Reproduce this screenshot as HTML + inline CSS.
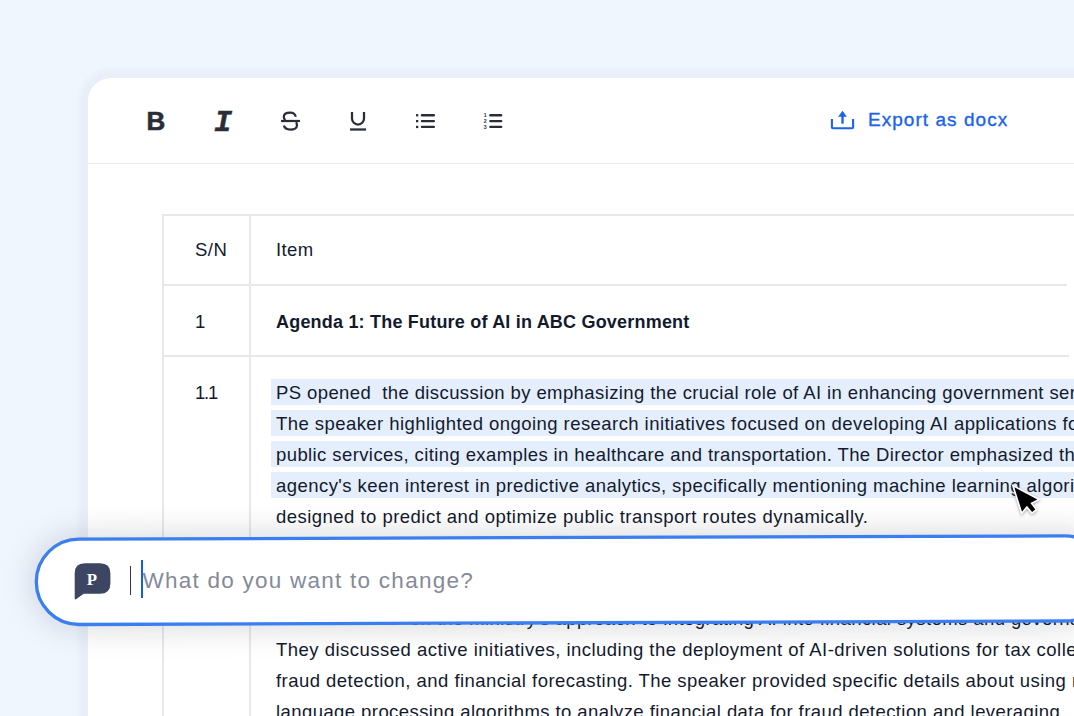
<!DOCTYPE html>
<html lang="en">
<head>
<meta charset="utf-8">
<title>Editor</title>
<style>
*{box-sizing:border-box;margin:0;padding:0}
html,body{width:1074px;height:716px;overflow:hidden;background:#f0f6fe}
body{position:relative;font-family:"Liberation Sans",Arial,sans-serif;color:#131a2e}
.card{position:absolute;left:88px;top:77.5px;width:1100px;height:760px;background:#fff;border-radius:23px 0 0 0;box-shadow:0 0 5px 9px #e9eff9}
.tb-line{position:absolute;left:88px;top:163px;width:1000px;height:1px;background:#e9ebf1}
.ico{position:absolute;overflow:visible}
.glyph{position:absolute;white-space:pre;color:#2a2d38;font-weight:700;transform-origin:0 0}
.export{position:absolute;left:868px;top:106px;font-size:19px;line-height:28px;color:#1d62ea;white-space:pre;letter-spacing:1.04px;-webkit-text-stroke:.35px #1d62ea}
.hl{position:absolute;left:271px;width:820px;height:26px;background:#e4eefc}
.ln{position:absolute;left:276px;font-size:18.5px;line-height:31px;white-space:pre;color:#131a2e}
.cell{position:absolute;font-size:18.5px;line-height:31px;white-space:pre;color:#131a2e}
.vline{position:absolute;width:2px;background:#e6e8ee}
.hline{position:absolute;height:2px;background:#e6e8ee}
.ph{position:absolute;left:142.5px;top:563px;font-size:22.5px;line-height:36px;color:#848a99;white-space:pre;letter-spacing:1.25px}
</style>
</head>
<body>
<div class="card"></div>
<div class="tb-line"></div>

<!-- toolbar icons -->
<div class="glyph" style="left:146.5px;top:105.5px;font-size:26px;line-height:31px;-webkit-text-stroke:.6px #2a2d38">B</div>
<div class="glyph" style="left:214px;top:108px;font-size:30px;line-height:31px;font-style:italic;font-family:'Liberation Mono',monospace;-webkit-text-stroke:.5px #2a2d38">I</div>
<svg class="ico" style="left:0;top:0" width="1074" height="160" viewBox="0 0 1074 160" fill="none" stroke="#2a2d38" stroke-width="2.25">
  <path d="M295.8 116.8C295 114 293.2 112.7 290.4 112.7C287 112.7 283.8 114 283.8 117C283.8 118.4 284.4 119.4 285.4 120.2"/>
  <path d="M283.9 125.6C284.5 128.2 287 129.6 290.5 129.6C294 129.6 297 128.1 297 125.3C297 124 296.6 123 296 122.2"/>
  <path d="M281 121H300"/>
  <path d="M352 112V118.5a6 6 0 0 0 12 0V112"/>
  <path d="M350 129.5H366"/>
  <g stroke="none" fill="#2a2d38">
    <rect x="416" y="114.1" width="2.3" height="2.3"/><rect x="416" y="120" width="2.3" height="2.3"/><rect x="416" y="125.8" width="2.3" height="2.3"/>
    <rect x="420.8" y="114.1" width="14.2" height="2.3" rx="1"/><rect x="420.8" y="120" width="14.2" height="2.3" rx="1"/><rect x="420.8" y="125.8" width="14.2" height="2.3" rx="1"/>
    <rect x="489.2" y="114.1" width="13.1" height="2.3" rx="1"/><rect x="489.2" y="120" width="13.1" height="2.3" rx="1"/><rect x="489.2" y="125.8" width="13.1" height="2.3" rx="1"/>
    <text x="483.7" y="117.1" font-family="Liberation Sans,sans-serif" font-size="5.2" font-weight="700">1</text>
    <text x="483.7" y="123" font-family="Liberation Sans,sans-serif" font-size="5.2" font-weight="700">2</text>
    <text x="483.7" y="128.8" font-family="Liberation Sans,sans-serif" font-size="5.2" font-weight="700">3</text>
  </g>
  <g stroke="#1d62ea" stroke-width="2.1">
    <path d="M831.9 119V127.3Q831.9 128.3 832.9 128.3H852.1Q853.1 128.3 853.1 127.3V119"/>
    <path d="M842.5 116V123.7" stroke-width="2.4"/>
    <path d="M842.5 110.8L846.9 116.8H838.1Z" fill="#1d62ea" stroke="none"/>
  </g>
</svg>
<div class="export">Export as docx</div>

<!-- table grid -->
<div class="hline" style="left:162px;top:214px;width:920px"></div>
<div class="hline" style="left:162px;top:284px;width:905px"></div>
<div class="hline" style="left:162px;top:355px;width:907px"></div>
<div class="vline" style="left:162px;top:214px;height:520px"></div>
<div class="vline" style="left:249px;top:214px;height:520px"></div>

<div class="cell" style="left:195px;top:234px;letter-spacing:.45px">S/N</div>
<div class="cell" style="left:276px;top:234px;letter-spacing:.4px">Item</div>
<div class="cell" style="left:195px;top:306px">1</div>
<div class="cell" style="left:276px;top:307px;font-weight:700;font-size:18px;letter-spacing:.2px">Agenda 1: The Future of AI in ABC Government</div>
<div class="cell" style="left:195px;top:377px;letter-spacing:-1.2px">1.1</div>

<div class="hl" style="top:379px"></div>
<div class="hl" style="top:410px"></div>
<div class="hl" style="top:441px"></div>
<div class="hl" style="top:472px"></div>

<div class="ln" id="l1" style="top:377px;letter-spacing:0.398px">PS opened  the discussion by emphasizing the crucial role of AI in enhancing government services.</div>
<div class="ln" id="l2" style="top:408px;letter-spacing:0.437px">The speaker highlighted ongoing research initiatives focused on developing AI applications for</div>
<div class="ln" id="l3" style="top:439px;letter-spacing:0.404px">public services, citing examples in healthcare and transportation. The Director emphasized the</div>
<div class="ln" id="l4" style="top:470px;letter-spacing:0.445px">agency's keen interest in predictive analytics, specifically mentioning machine learning algorithms</div>
<div class="ln" id="l5" style="top:501px;letter-spacing:0.469px">designed to predict and optimize public transport routes dynamically.</div>
<div class="cell" style="left:195px;top:603px;letter-spacing:-1px">1.2</div>
<div class="ln" id="l6" style="top:603px;letter-spacing:0.416px">PS elaborated  on the ministry's approach to integrating AI into financial systems and governance.</div>
<div class="ln" id="l7" style="top:634px;letter-spacing:0.482px">They discussed active initiatives, including the deployment of AI-driven solutions for tax collection,</div>
<div class="ln" id="l8" style="top:665px;letter-spacing:0.463px">fraud detection, and financial forecasting. The speaker provided specific details about using natural</div>
<div class="ln" id="l9" style="top:696px;letter-spacing:0.424px">language processing algorithms to analyze financial data for fraud detection and leveraging</div>

<!-- prompt box -->
<div style="position:absolute;left:38px;top:541px;width:1068px;height:82px;border-radius:41px;transform-origin:0 50%;transform:rotate(-.19deg);box-shadow:0 0 36px 1px rgba(10,15,30,.2)"></div>
<svg class="ico" style="left:0;top:0" width="1074" height="716" viewBox="0 0 1074 716"><path d="M79 539.1L1065 535.9A42.55 42.55 0 0 1 1065 621L79 624.5A42.7 42.7 0 0 1 79 539.1Z" fill="#fff" stroke="#3a7ef0" stroke-width="3.3"/></svg>
<svg class="ico" style="left:74px;top:563px" width="37" height="37" viewBox="0 0 37 37"><path d="M10.7 0.2H26Q36.4 0.2 36.4 10.5V20.4Q36.4 30.7 26 30.7H9.7L2 36.3Q0.7 36.8 0.7 35.2V10.2Q0.7 0.2 10.7 0.2Z" fill="#3c4663"/><text x="18" y="21.8" text-anchor="middle" font-family="Liberation Serif,serif" font-weight="700" font-size="16.8" fill="#fff">P</text></svg>
<div style="position:absolute;left:129.7px;top:566px;width:1.8px;height:29px;background:#33363f"></div>
<div style="position:absolute;left:140.9px;top:560px;width:2.3px;height:38px;background:#0f5cef"></div>
<div class="ph">What do you want to change?</div>

<!-- mouse pointer -->
<svg class="ico" style="left:0;top:0;filter:drop-shadow(0 1px 1.5px rgba(0,0,0,.35))" width="1074" height="716" viewBox="0 0 1074 716"><path d="M1014.3 487.2L1022 511.7L1026.9 505.7L1032.1 512L1035.3 509.6L1030.4 502.9L1037.4 499.4Z" fill="#000" stroke="#fff" stroke-width="3.2" stroke-linejoin="miter" paint-order="stroke"/></svg>
</body>
</html>
